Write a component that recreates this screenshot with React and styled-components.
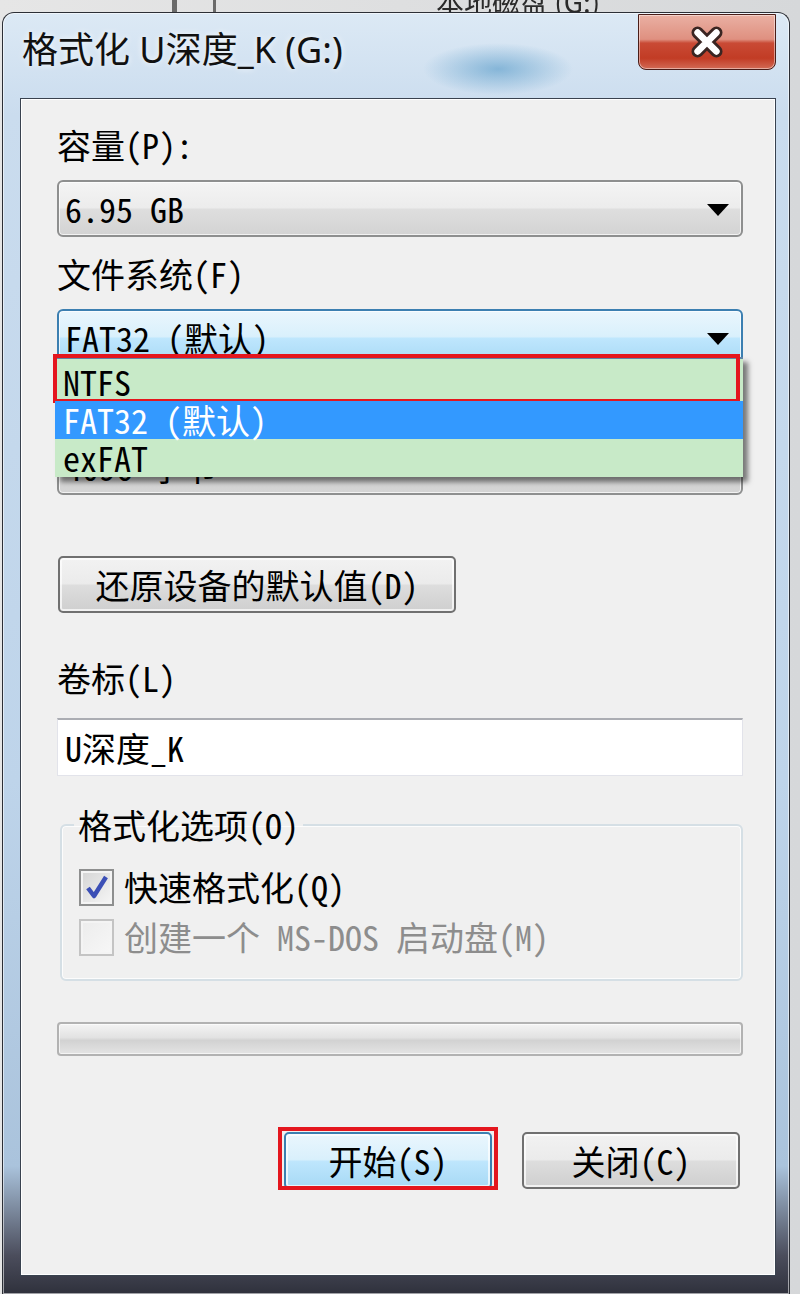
import React from "react";
import styled, { createGlobalStyle, css } from "styled-components";

const MONO = `"Noto Sans Mono CJK SC", "Liberation Mono", "Noto Sans CJK SC", monospace`;

const GlobalStyle = createGlobalStyle`
  html, body { margin: 0; padding: 0; }
  body {
    width: 800px;
    height: 1294px;
    overflow: hidden;
    background: #d9dadc;
    font-family: ${MONO};
  }
  * { box-sizing: border-box; }
`;

const Page = styled.div`
  width: 800px;
  height: 1294px;
  display: flex;
  flex-direction: column;
  overflow: hidden;
  background: linear-gradient(90deg, #e6e6e6, #d6d8da);
`;

// the explorer window peeking out behind the dialog
const Backdrop = styled.div`
  height: 12px;
  flex: none;
  display: flex;
  align-items: flex-end;
  overflow: hidden;
`;

const BackLine = styled.span`
  flex: none;
  width: ${(p) => p.$w}px;
  height: 100%;
  margin-left: ${(p) => p.$at}px;
  background: #6a6a6a;
`;

const BackText = styled.span`
  margin-left: 220px;
  margin-bottom: -4px;
  font: 28px/30px "Noto Sans CJK SC", sans-serif;
  color: #2a2a2a;
  filter: blur(0.7px);
  white-space: nowrap;
`;

const Window = styled.div`
  flex: 1;
  margin: 0 10px 0 2px;
  display: flex;
  flex-direction: column;
  padding: 0 13px 18px 17px;
  border: 1px solid #2c2f36;
  border-bottom: none;
  border-radius: 12px 12px 0 0;
  background:
    radial-gradient(ellipse 75px 26px at 495px 56px, rgba(70, 145, 195, 0.55), transparent),
    linear-gradient(180deg, #dce9f5 0%, #cadcee 8%, #bed4ea 60%, #aac3dc 90%, #4b4d5c 97%, #2f313c 100%);
  box-shadow: inset 0 0 0 1px rgba(255, 255, 255, 0.55);
`;

const TitleBar = styled.div`
  height: 85px;
  flex: none;
  display: flex;
  justify-content: space-between;
  align-items: flex-start;
`;

const Title = styled.div`
  margin-left: 2px;
  padding-top: 15px;
  font: 36px/44px "Noto Sans", "Noto Sans CJK SC", sans-serif;
  color: #111;
  text-shadow: 0 0 6px rgba(255, 255, 255, 0.9);
  white-space: nowrap;
`;

const CloseButton = styled.div`
  width: 138px;
  height: 56px;
  margin-top: 1px;
  display: flex;
  align-items: center;
  justify-content: center;
  border: 1px solid #4a1d18;
  border-radius: 0 0 8px 8px;
  background: linear-gradient(180deg, #eab0a3 0%, #df9080 45%, #c94a35 52%, #c23c25 80%, #d26a55 100%);
  box-shadow: inset 0 0 0 1px rgba(255, 255, 255, 0.45);
`;

const Client = styled.div`
  flex: 1;
  display: flex;
  flex-direction: column;
  padding: 26px 32px 0 36px;
  background: #f0f0f0;
  border: 1px solid #39424f;
  box-shadow: inset 0 0 0 1px #ffffff;
`;

const Label = styled.div`
  margin-top: ${(p) => p.$mt || 0}px;
  font: 34px/40px ${MONO};
  color: ${(p) => (p.$disabled ? "#8d8d8d" : "#000")};
  white-space: nowrap;
`;

// hidden behind the open drop list, only keeps the rhythm of the form
const Spacer = styled.div`
  height: ${(p) => p.$h}px;
  margin-top: ${(p) => p.$mt || 0}px;
  flex: none;
`;

const Combo = styled.div`
  position: relative;
  height: 57px;
  margin-top: 15px;
  display: flex;
  align-items: center;
  padding-left: 6px;
  border: 2px solid #8e8f8f;
  border-radius: 6px;
  font: 34px/40px ${MONO};
  color: #000;
  background: linear-gradient(180deg, #f4f4f4 0%, #ececec 48%, #dedede 52%, #d3d3d3 100%);
  box-shadow: inset 0 0 0 1px rgba(255, 255, 255, 0.7);
  ${(p) =>
    p.$focused &&
    css`
      border-color: #3c7fb1;
      background: linear-gradient(180deg, #eaf6fd 0%, #d9f0fc 48%, #bee6fd 52%, #a7d9f5 100%);
    `}

  &::after {
    content: "";
    position: absolute;
    right: 12px;
    top: 50%;
    margin-top: -5px;
    border-left: 11px solid transparent;
    border-right: 11px solid transparent;
    border-top: 12px solid #000;
  }
`;

const DropList = styled.div`
  position: absolute;
  z-index: 10;
  top: 46px;
  left: -4px;
  right: -2px;
  padding-top: 4px;
  border-top: 2px solid #5f84a8;
  background: #c8eac8;
  box-shadow: 5px 5px 5px rgba(0, 0, 0, 0.5);
`;

const DropItem = styled.div`
  position: relative;
  height: 38px;
  padding-left: 8px;
  font: 34px/38px ${MONO};
  color: ${(p) => (p.$selected ? "#fff" : "#000")};
  background: ${(p) => (p.$selected ? "#3399ff" : "transparent")};
  white-space: nowrap;

  ${(p) =>
    p.$marked &&
    css`
      &::after {
        content: "";
        position: absolute;
        inset: -9px 3px -2px -2px;
        border: 4px solid #e4161e;
      }
    `}
`;

const Button = styled.div`
  height: 57px;
  width: ${(p) => p.$w}px;
  display: flex;
  align-items: center;
  justify-content: center;
  border: 2px solid #707070;
  border-radius: 5px;
  font: 34px/40px ${MONO};
  color: #000;
  background: linear-gradient(180deg, #f2f2f2 0%, #ebebeb 48%, #dddddd 52%, #cfcfcf 100%);
  box-shadow: inset 0 0 0 2px rgba(255, 255, 255, 0.7);
  white-space: nowrap;
  ${(p) =>
    p.$default &&
    css`
      border-color: #3c7fb1;
      background: linear-gradient(180deg, #eaf6fd 0%, #d9f0fc 48%, #bee6fd 52%, #a7d9f5 100%);
    `}
`;

const ResetButton = styled(Button)`
  margin-top: 61px;
  margin-left: 1px;
`;

const TextBox = styled.div`
  height: 58px;
  margin-top: 20px;
  display: flex;
  align-items: center;
  padding-left: 7px;
  background: #fff;
  border: 1px solid #e2e3ea;
  border-top: 2px solid #abadb3;
  font: 34px/40px ${MONO};
  color: #000;
`;

const Group = styled.fieldset`
  margin: 30px 0 0 3px;
  padding: 0 17px 17px;
  min-width: 0;
  border: 2px solid #d5dfe5;
  border-radius: 6px;
  box-shadow: inset 0 0 0 1px rgba(255, 255, 255, 0.8);
`;

const Legend = styled.legend`
  margin-left: -5px;
  padding: 0 4px;
  font: 34px/38px ${MONO};
  color: #000;
`;

const CheckList = styled.div`
  padding-top: 18px;
  display: flex;
  flex-direction: column;
`;

const CheckRow = styled.div`
  height: 50px;
  display: flex;
  align-items: center;
  gap: 10px;
`;

const CheckBox = styled.span`
  flex: none;
  width: 35px;
  height: 37px;
  display: flex;
  align-items: center;
  justify-content: center;
  border: 2px solid ${(p) => (p.$disabled ? "#c4c4c4" : "#8e8f8f")};
  background: ${(p) =>
    p.$disabled
      ? "linear-gradient(135deg, #ececec, #f7f7f7)"
      : "linear-gradient(135deg, #d4d4d4, #f6f6f6)"};
  box-shadow: inset 0 0 0 2px #f4f4f4;
`;

const Progress = styled.div`
  height: 34px;
  margin-top: 41px;
  border: 2px solid #b2b2b2;
  border-radius: 4px;
  background: linear-gradient(180deg, #f4f4f4 0%, #e2e2e2 45%, #d2d2d2 55%, #e4e4e4 100%);
  box-shadow: inset 0 0 0 1px rgba(255, 255, 255, 0.6);
`;

const ButtonRow = styled.div`
  margin-top: 76px;
  padding-right: 3px;
  display: flex;
  justify-content: flex-end;
  gap: 30px;
`;

const Highlight = styled.div`
  position: relative;

  &::after {
    content: "";
    position: absolute;
    inset: -5px -6px -1px -6px;
    border: 4px solid #e4161e;
  }
`;

function CloseGlyph() {
  return (
    <svg width="42" height="32" viewBox="0 0 44 34">
      <path d="M12 7 L32 27 M32 7 L12 27" stroke="#3a2522" strokeWidth="13" strokeLinecap="round" />
      <path d="M12 7 L32 27 M32 7 L12 27" stroke="#ffffff" strokeWidth="7" strokeLinecap="round" />
    </svg>
  );
}

function CheckMark() {
  return (
    <svg width="26" height="28" viewBox="0 0 26 28">
      <path d="M4 15 L10 23 L22 4" fill="none" stroke="#3b4fb6" strokeWidth="4.5" strokeLinejoin="round" />
    </svg>
  );
}

export default function App() {
  return (
    <Page>
      <GlobalStyle />
      <Backdrop>
        <BackLine $at={172} $w={5} />
        <BackLine $at={36} $w={3} />
        <BackText>本地磁盘 (G:)</BackText>
      </Backdrop>
      <Window>
        <TitleBar>
          <Title>格式化 U深度_K (G:)</Title>
          <CloseButton>
            <CloseGlyph />
          </CloseButton>
        </TitleBar>
        <Client>
          <Label>容量(P):</Label>
          <Combo>6.95 GB</Combo>

          <Label $mt={17}>文件系统(F)</Label>
          <Combo $focused>
            FAT32 (默认)
            <DropList>
              <DropItem $marked>NTFS</DropItem>
              <DropItem $selected>FAT32 (默认)</DropItem>
              <DropItem>exFAT</DropItem>
            </DropList>
          </Combo>

          <Spacer $mt={17} $h={40} />
          <Combo>4096 字节</Combo>

          <ResetButton $w={398}>还原设备的默认值(D)</ResetButton>

          <Label $mt={45}>卷标(L)</Label>
          <TextBox>U深度_K</TextBox>

          <Group>
            <Legend>格式化选项(O)</Legend>
            <CheckList>
              <CheckRow>
                <CheckBox>
                  <CheckMark />
                </CheckBox>
                <Label>快速格式化(Q)</Label>
              </CheckRow>
              <CheckRow>
                <CheckBox $disabled />
                <Label $disabled>创建一个 MS-DOS 启动盘(M)</Label>
              </CheckRow>
            </CheckList>
          </Group>

          <Progress />

          <ButtonRow>
            <Highlight>
              <Button $w={208} $default>
                开始(S)
              </Button>
            </Highlight>
            <Button $w={218}>关闭(C)</Button>
          </ButtonRow>
        </Client>
      </Window>
    </Page>
  );
}
